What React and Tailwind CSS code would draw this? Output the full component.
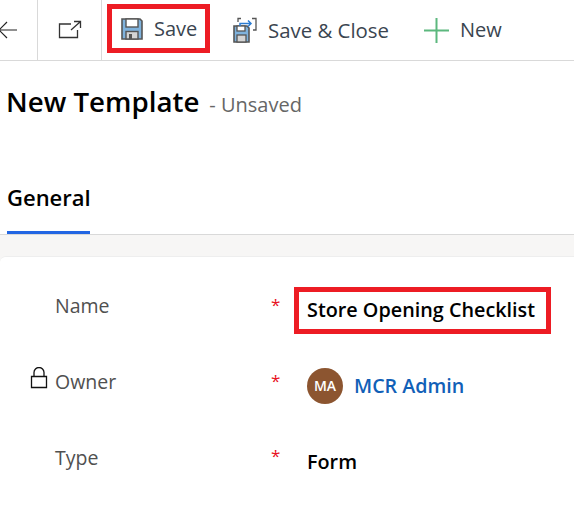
import React from "react";

const font = { fontFamily: '"Open Sans", "Noto Sans", sans-serif' };

function SaveIcon() {
  return (
    <svg width="22" height="22" viewBox="0 0 22 22" className="shrink-0">
      <path d="M1 1h18l2 2v18H1z" fill="#7fb2dc" stroke="#555" strokeWidth="1.600" />
      <rect x="5" y="1" width="12" height="8" fill="#fff" stroke="#555" strokeWidth="1.400" />
      <rect x="5" y="13.500" width="12" height="7.500" fill="#d4d4d4" stroke="#555" strokeWidth="1.400" />
      <rect x="8" y="16" width="3" height="5" fill="#555" />
    </svg>
  );
}

function SaveCloseIcon() {
  return (
    <svg width="24" height="26" viewBox="0 0 24 26" className="shrink-0">
      <path d="M1 9h13l2 2v14H1z" fill="#7fb2dc" stroke="#555" strokeWidth="1.600" />
      <rect x="4" y="9" width="8" height="5" fill="#fff" stroke="#555" strokeWidth="1.300" />
      <rect x="4" y="18" width="9" height="7" fill="#d4d4d4" stroke="#555" strokeWidth="1.300" />
      <path d="M5 5V1.500h3M19 1.500h4V13h-3" fill="none" stroke="#555" strokeWidth="1.300" />
      <path d="M7 9V6.500h11M15 3.500l3 3-3 3" fill="none" stroke="#2b7cd3" strokeWidth="1.500" />
    </svg>
  );
}

function Field({ label, lock, children, labelShift, starShift }) {
  return (
    <div className="flex h-[75px] items-center">
      <div className={`relative flex w-[271px] shrink-0 items-center pl-[55px] text-[19.500px] leading-6 text-[#505050] ${labelShift}`}>
        {lock && (
          <svg width="18" height="22" viewBox="0 0 18 22" className="absolute left-[30px] top-[-3px]">
            <path d="M1.500 9.500h15v11h-15zM4 9.500V5.500a5 5 0 0 1 10 0v4" fill="#fff" stroke="#111" strokeWidth="1.300" />
          </svg>
        )}
        {label}
      </div>
      <div className={`w-[23px] shrink-0 text-[17px] leading-6 text-[#e81123] ${starShift}`}>*</div>
      {children}
    </div>
  );
}

export default function App() {
  return (
    <div className="flex h-[514px] w-[574px] flex-col overflow-hidden bg-white" style={font}>
      <div className="flex h-[61px] shrink-0 items-stretch border-b border-[#d9d9d9]">
        <div className="flex w-[38px] shrink-0 items-center border-r border-[#d9d9d9]">
          <svg width="18" height="22" viewBox="0 0 18 22">
            <path d="M17 11H0M7 3l-8 8 8 8" fill="none" stroke="#222" strokeWidth="1.200" />
          </svg>
        </div>
        <div className="flex w-[64px] shrink-0 items-center justify-center border-r border-[#d9d9d9]">
          <svg width="24" height="20" viewBox="0 0 24 20">
            <path d="M13 4H1.500v13.500h18V10" fill="none" stroke="#333" strokeWidth="1.300" />
            <path d="M13 10l9-8M16 1.500h6.500V8" fill="none" stroke="#333" strokeWidth="1.300" />
          </svg>
        </div>
        <div className="mb-[7px] ml-[5px] mt-1 flex w-[103px] shrink-0 items-center gap-[11px] border-[5px] border-[#ed1c24] pl-[9px]">
          <SaveIcon />
          <span className="pt-[1px] text-[20px] text-[#3a4550]">Save</span>
        </div>
        <div className="ml-[23px] flex shrink-0 items-center gap-[11px]">
          <SaveCloseIcon />
          <span className="text-[20.400px] text-[#3a4550]">Save &amp; Close</span>
        </div>
        <div className="ml-[35px] flex shrink-0 items-center gap-[11px]">
          <svg width="25" height="25" viewBox="0 0 25 25">
            <path d="M12.500 0v25M0 12.500h25" stroke="#5cb87e" strokeWidth="2" />
          </svg>
          <span className="text-[20px] text-[#3a4550]">New</span>
        </div>
      </div>

      <div className="flex h-[80px] shrink-0 items-baseline gap-[10px] pl-[6px] pt-[19px]">
        <span className="text-[27.700px] font-semibold leading-[42px] text-black">New Template</span>
        <span className="text-[20px] text-[#666]">- Unsaved</span>
      </div>

      <div className="h-[94px] shrink-0 border-b border-[#d9d9d9] pl-[7px] pt-[41px]">
        <div className="flex h-[52px] w-[83px] items-start border-b-[3px] border-[#2266e3] pt-[1px] text-[22px] font-semibold leading-7 whitespace-nowrap text-black">
          General
        </div>
      </div>

      <div className="flex-1 bg-[#f7f6f5] pt-[21px]">
        <div className="h-full rounded-tl-[6px] border-t border-[#eeeeee] bg-white pt-[16px]">
          <Field label="Name" labelShift="-mt-[10px]" starShift="-mt-[12px]">
            <div className="mb-[1px] flex h-[47px] w-[257px] items-center border-[5px] border-[#ed1c24] pl-2 text-[19.800px] font-semibold whitespace-nowrap text-black">
              Store Opening Checklist
            </div>
          </Field>
          <Field label="Owner" lock labelShift="-mt-[7px]" starShift="-mt-[10px]">
            <div className="flex items-center gap-[11px] pl-[13px]">
              <div className="flex h-9 w-9 items-center justify-center rounded-full bg-[#8c5530] text-[14px] font-semibold text-white">
                MA
              </div>
              <span className="text-[19.700px] font-semibold text-[#1160b7]">MCR Admin</span>
            </div>
          </Field>
          <Field label="Type" labelShift="-mt-[6px]" starShift="-mt-[10px]">
            <div className="pl-[13px] pt-[2px] text-[19.800px] font-semibold text-black">Form</div>
          </Field>
        </div>
      </div>
    </div>
  );
}
